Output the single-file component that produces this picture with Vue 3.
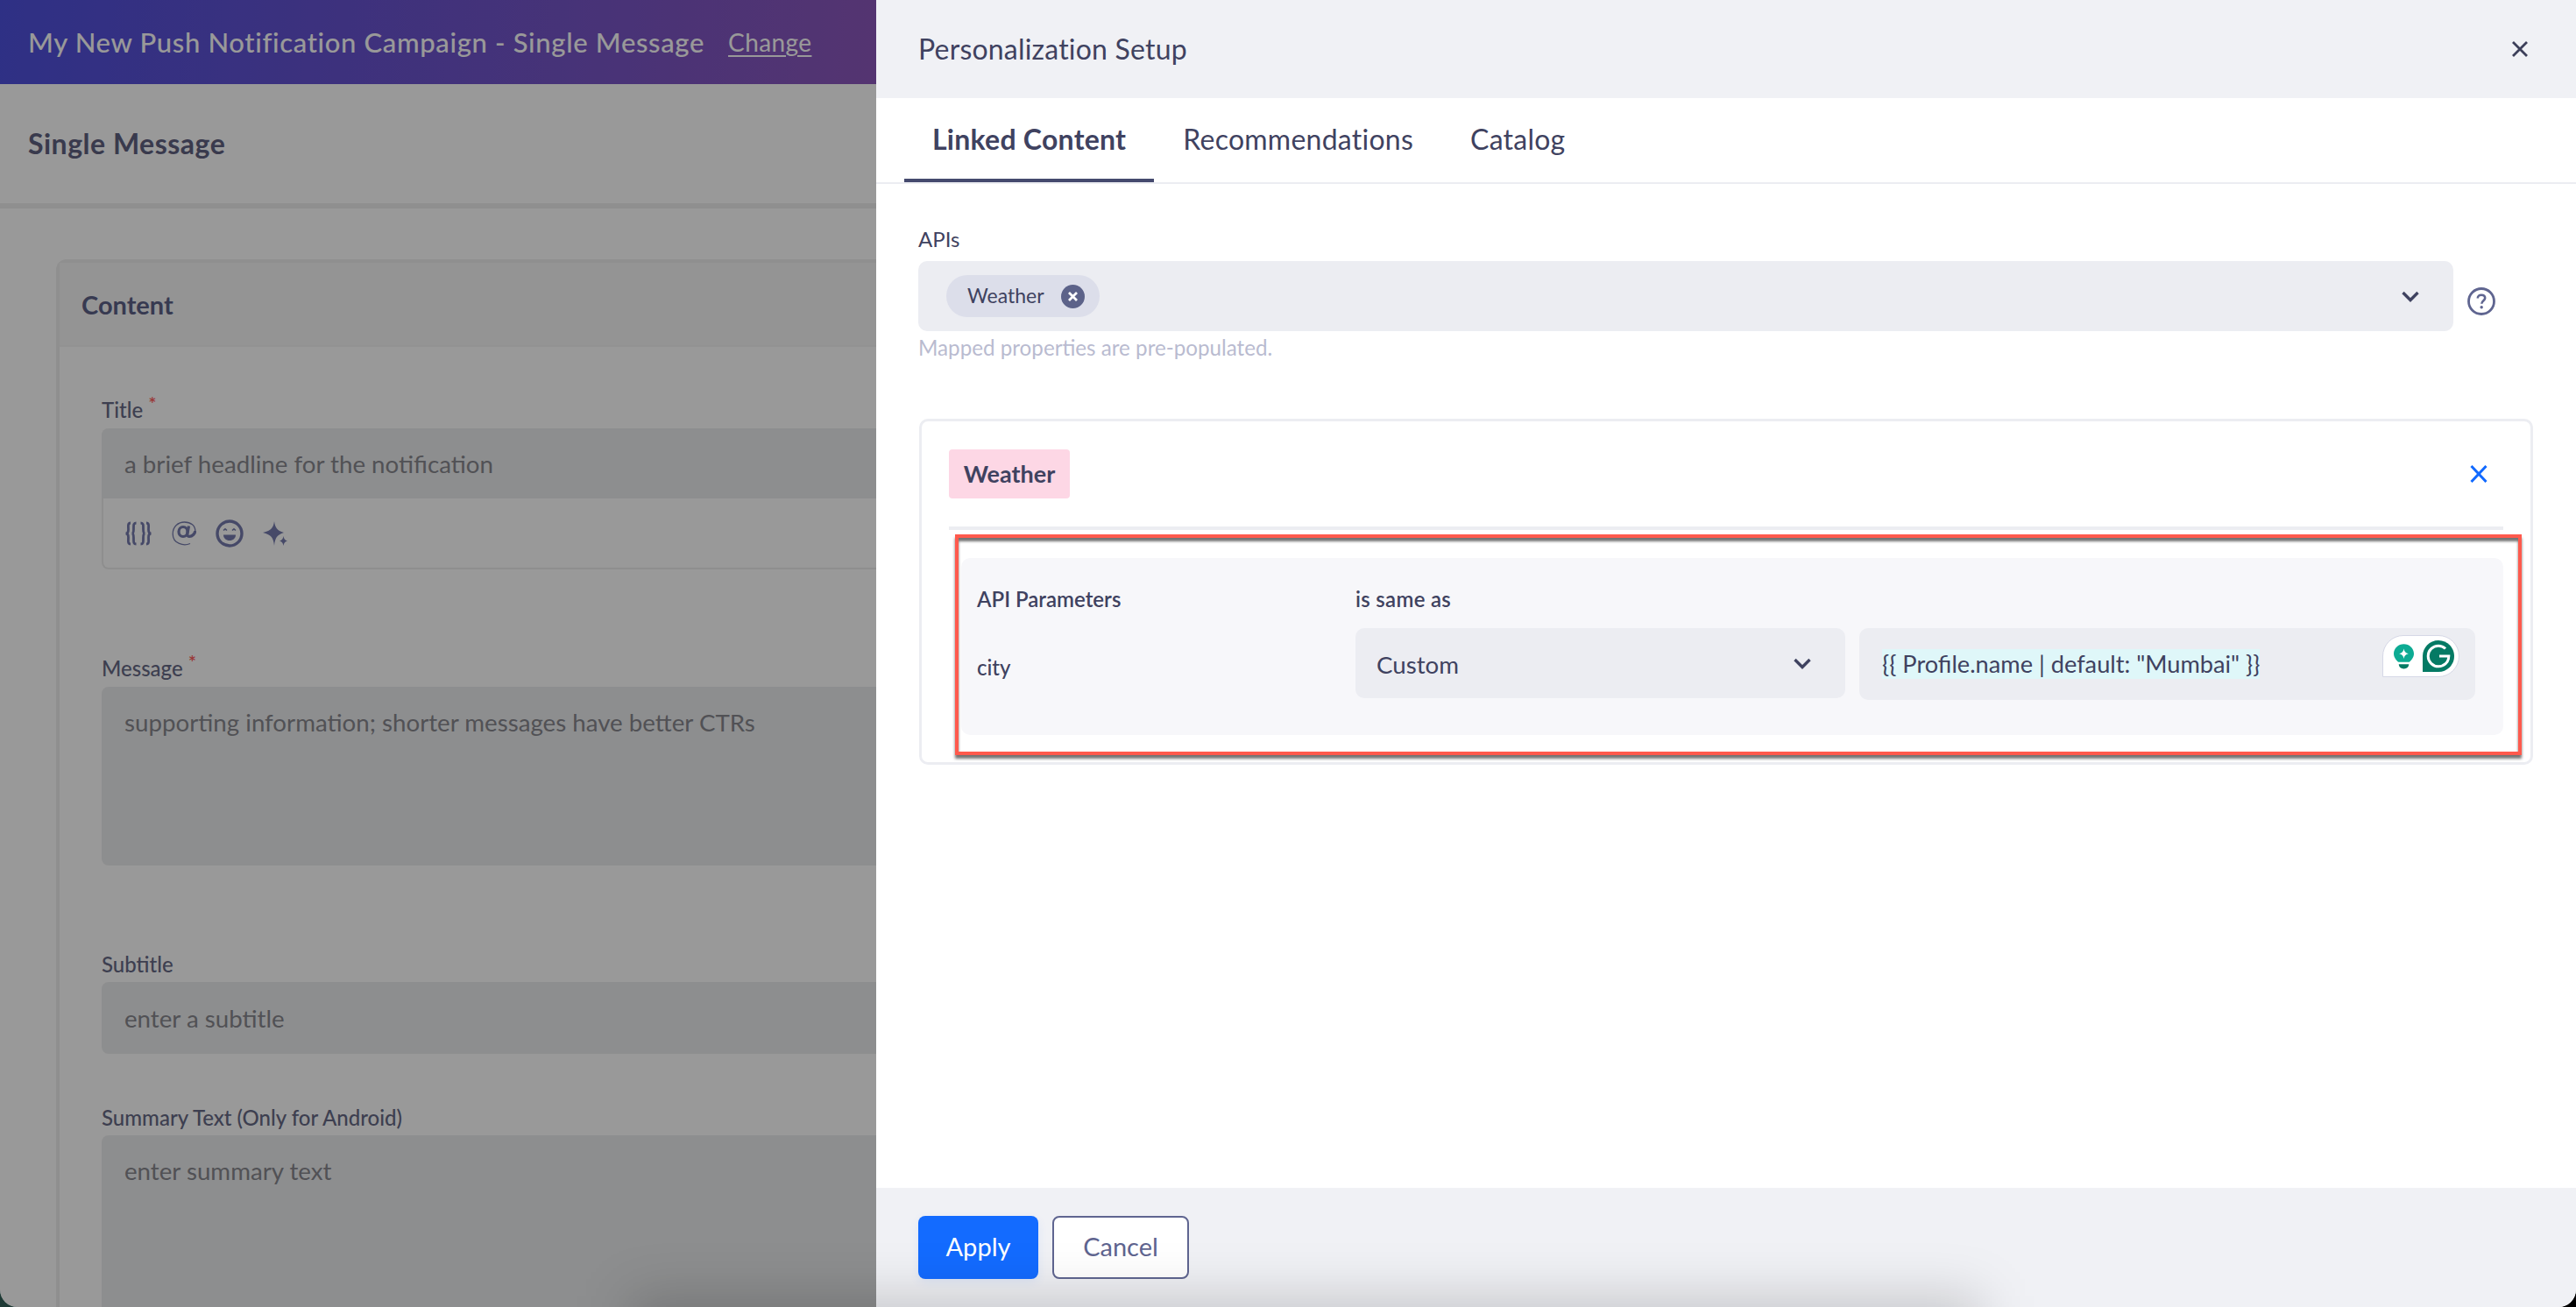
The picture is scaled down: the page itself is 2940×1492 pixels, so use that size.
<script setup>
const tabs = [
  { label: 'Linked Content', active: true },
  { label: 'Recommendations', active: false },
  { label: 'Catalog', active: false }
]
</script>

<template>
  <div class="screen">
    <div class="page">
      <header class="topbar">
        <span class="campaign">My New Push Notification Campaign - Single Message</span>
        <a class="change">Change</a>
      </header>
      <div class="subbar">Single Message</div>
      <div class="page-body">
        <section class="content-card">
          <div class="content-head">Content</div>
          <div class="content-body">
            <label class="field-label title-label">Title <sup class="req">*</sup></label>
            <div class="title-box">
              <div class="input-fake">a brief headline for the notification</div>
              <div class="toolbar">
                <svg class="ic-braces" viewBox="0 0 32 28" fill="none" stroke="#757bad" stroke-width="2.8">
                  <path d="M7 2C3.500 2 4.500 6 4.500 9.500C4.500 12 3.500 14 1.500 14C3.500 14 4.500 16 4.500 18.500C4.500 22 3.500 26 7 26" />
                  <path d="M25 2C28.500 2 27.500 6 27.500 9.500C27.500 12 28.500 14 30.500 14C28.500 14 27.500 16 27.500 18.500C27.500 22 28.500 26 25 26" />
                  <path d="M13.500 2C10 2 10.500 5 10.500 9C10.500 12 10 14 8.500 14C10 14 10.500 16 10.500 19C10.500 23 10 26 13.500 26" />
                  <path d="M18.500 2C22 2 21.500 5 21.500 9C21.500 12 22 14 23.500 14C22 14 21.500 16 21.500 19C21.500 23 22 26 18.500 26" />
                </svg>
                <svg class="ic-at" viewBox="0 0 28 28" fill="none" stroke="#757bad">
                  <path stroke-width="1.300" d="M21 25.500C14 28.500 1.200 26 1.200 14.500C1.200 6 7.500 1 14.500 1C22 1 26.800 5 26.800 11" />
                  <ellipse cx="13" cy="12" rx="5" ry="5.500" stroke-width="3.200" />
                  <path stroke-width="3.200" d="M19.500 5.500L17.800 15C17.500 18 22 18 24.500 15.500C26 14 26.800 12.500 26.800 11" />
                </svg>
                <svg class="ic-smile" viewBox="0 0 32 32" fill="none">
                  <circle cx="16" cy="16" r="14" stroke="#757bad" stroke-width="3.400" />
                  <path d="M9 12.500L11 10.800L13 12.500M19 12.500L21 10.800L23 12.500" stroke="#757bad" stroke-width="1.600" />
                  <path d="M9 17.500H23C23 21.500 20 24 16 24C12 24 9 21.500 9 17.500Z" fill="#757bad" />
                </svg>
                <svg class="ic-spark" viewBox="0 0 28 28" fill="#757bad">
                  <path d="M13 0C14 7 16 10.500 24 13C16 15.500 14 19 13 28C12 19 10 15.500 0 13C10 10.500 12 7 13 0Z" />
                  <path d="M23.500 17C24 20 25 21.500 28 22.500C25 23.500 24 25 23.500 28C23 25 22 23.500 19 22.500C22 21.500 23 20 23.500 17Z" />
                </svg>
              </div>
            </div>
            <label class="field-label message-label">Message <sup class="req">*</sup></label>
            <div class="area-fake message-area">supporting information; shorter messages have better CTRs</div>
            <label class="field-label subtitle-label">Subtitle</label>
            <div class="input-fake subtitle-input">enter a subtitle</div>
            <label class="field-label summary-label">Summary Text (Only for Android)</label>
            <div class="area-fake summary-area">enter summary text</div>
          </div>
        </section>
      </div>
      <div class="scrim"></div>
    </div>

    <aside class="drawer">
      <div class="drawer-head">
        <span class="drawer-title">Personalization Setup</span>
        <svg class="close-ic" viewBox="0 0 18 18" fill="none" stroke="#3c3f59" stroke-width="2.800">
          <path d="M1 1L17 17M17 1L1 17" />
        </svg>
      </div>
      <nav class="tabs">
        <a v-for="t in tabs" :key="t.label" class="tab" :class="{ active: t.active }">{{ t.label }}</a>
      </nav>
      <div class="drawer-content">
        <div class="apis-label">APIs</div>
        <div class="apis-row">
          <div class="select-box apis-select">
            <span class="chip">
              <span class="chip-text">Weather</span>
              <svg class="chip-x" viewBox="0 0 27 27">
                <circle cx="13.500" cy="13.500" r="13.500" fill="#5c6289" />
                <path d="M9 9L18 18M18 9L9 18" stroke="#fff" stroke-width="2.800" />
              </svg>
            </span>
            <svg class="chev" viewBox="0 0 20 13" fill="none" stroke="#3f4260" stroke-width="3.400">
              <path d="M1.500 2L10 10.500L18.500 2" />
            </svg>
          </div>
          <svg class="help-ic" viewBox="0 0 32 32" fill="none">
            <circle cx="16" cy="16" r="14.500" stroke="#5f6590" stroke-width="2.800" />
            <path d="M11.800 12.500C11.800 10 13.500 8.800 16 8.800C18.500 8.800 20.200 10.200 20.200 12.300C20.200 15.200 16.300 15.300 16.300 18.800" stroke="#5f6590" stroke-width="2.600" />
            <circle cx="16.200" cy="22.800" r="1.700" fill="#5f6590" />
          </svg>
        </div>
        <div class="helper">Mapped properties are pre-populated.</div>

        <section class="api-card">
          <div class="api-card-head">
            <span class="api-tag">Weather</span>
            <svg class="blue-x" viewBox="0 0 20 20" fill="none" stroke="#1169ff" stroke-width="3">
              <path d="M1.500 1L18.500 19M18.500 1L1.500 19" />
            </svg>
          </div>
          <div class="api-divider"></div>
          <div class="param-panel">
            <div class="param-label">API Parameters</div>
            <div class="param-label same-as">is same as</div>
            <div></div>
            <div class="param-name">city</div>
            <div class="select-box custom-select">
              <span class="custom-text">Custom</span>
              <svg class="chev" viewBox="0 0 20 13" fill="none" stroke="#3f4260" stroke-width="3.400">
                <path d="M1.500 2L10 10.500L18.500 2" />
              </svg>
            </div>
            <div class="liquid-input">
              <span class="liquid-text">{{ '{' + '{ Profile.name | default: "Mumbai" }' + '}' }}</span>
              <div class="grammarly">
                <svg class="g-bulb" viewBox="0 0 24 30">
                  <path d="M12 0C5.500 0 0 5 0 11.500C0 16 3 19 5.500 21.500H18.500C21 19 24 16 24 11.500C24 5 18.500 0 12 0Z" fill="#0dab93" />
                  <path d="M12 5.500C12.600 9 14 10.500 17.500 11.500C14 12.500 12.600 14 12 17.500C11.400 14 10 12.500 6.500 11.500C10 10.500 11.400 9 12 5.500Z" fill="#fff" />
                  <path d="M6 24H18C18 27 15.500 29.500 12 29.500C8.500 29.500 6 27 6 24Z" fill="#047a64" />
                </svg>
                <svg class="g-logo" viewBox="0 0 36 36">
                  <path d="M18 0C28 0 36 8 36 18C36 28 28 36 18 36H0V18C0 8 8 0 18 0Z" fill="#047a64" />
                  <path d="M26 9.500C23.800 7.400 21 6.200 18 6.200C11.500 6.200 6.200 11.500 6.200 18C6.200 24.500 11.500 29.800 18 29.800C24 29.800 29.800 25.500 29.800 18H19" fill="none" stroke="#fff" stroke-width="3" />
                </svg>
              </div>
            </div>
          </div>
          <div class="annotation"></div>
        </section>
      </div>
      <footer class="drawer-foot">
        <button class="btn-apply">Apply</button>
        <button class="btn-cancel">Cancel</button>
      </footer>
    </aside>
    <div class="bottom-shade"></div>
  </div>
</template>

<style>
html, body { margin: 0; padding: 0; background: #000; }
</style>

<style scoped>
.screen {
  position: relative;
  width: 2940px;
  height: 1492px;
  overflow: hidden;
  background: linear-gradient(90deg, #1e3a35 50%, #000 50%);
  font-family: Lato, "Liberation Sans", sans-serif;
  color: #3f4260;
}
.page {
  position: relative;
  width: 1040px;
  height: 1492px;
  background: #fff;
  border-bottom-left-radius: 20px;
  overflow: hidden;
  display: flex;
  flex-direction: column;
}
.topbar {
  height: 96px;
  flex: none;
  box-sizing: border-box;
  padding: 0 0 0 32px;
  display: flex;
  align-items: center;
  gap: 27px;
  background: linear-gradient(95deg, #4e50de 0%, #8f58bb 100%);
  color: #fff;
}
.campaign { font-size: 31px; font-weight: 500; letter-spacing: 0.66px; }
.change { font-size: 28px; letter-spacing: 0.4px; text-decoration: underline; text-underline-offset: 4px; }
.subbar {
  height: 142px;
  flex: none;
  box-sizing: border-box;
  padding: 0 0 2px 32px;
  display: flex;
  align-items: center;
  font-size: 32px;
  font-weight: 700;
  letter-spacing: 0.5px;
  color: #5f6180;
  border-bottom: 6px solid #eeeeee;
}
.page-body { padding: 58px 0 0 64px; flex: 1; min-height: 0; }
.content-card {
  border: 4px solid #eeeeee;
  border-right: none;
  border-radius: 12px 0 0 0;
  background: #fff;
  height: 1400px;
}
.content-head {
  height: 96px;
  box-sizing: border-box;
  padding-left: 25px;
  display: flex;
  align-items: center;
  background: #f7f7f7;
  font-size: 29px;
  font-weight: 700;
  color: #5d6187;
  border-bottom: 2px solid #f4f4f4;
}
.content-body { padding: 56px 0 0 48px; }
.field-label {
  display: block;
  height: 32px;
  line-height: 32px;
  font-size: 24px;
  font-weight: 500;
  color: #676a86;
}
.req { color: #ff5a5a; font-size: 22px; line-height: 0; vertical-align: 8px; }
.title-box {
  margin-top: 5px;
  border: 2px solid #ededed;
  border-top: none;
  border-right: none;
  border-radius: 8px 0 0 8px;
  height: 161px;
  box-sizing: border-box;
}
.input-fake {
  height: 80px;
  box-sizing: border-box;
  padding-left: 26px;
  display: flex;
  align-items: center;
  background: #ecedee;
  border-radius: 8px 0 0 0;
  font-size: 27.7px;
  color: #88888e;
}
.title-box .input-fake { margin-left: -2px; padding-left: 26px; }
.toolbar {
  height: 80px;
  box-sizing: border-box;
  padding-left: 24px;
  display: flex;
  align-items: center;
}
.ic-braces { width: 32px; height: 28px; margin-right: 22px; }
.ic-at { width: 28px; height: 28px; margin-right: 22px; }
.ic-smile { width: 32px; height: 32px; margin-right: 22px; }
.ic-spark { width: 28px; height: 28px; }
.message-label { margin-top: 97px; }
.area-fake {
  margin-top: 5px;
  box-sizing: border-box;
  padding: 24px 0 0 26px;
  line-height: 34px;
  background: #ecedee;
  border-radius: 8px 0 0 8px;
  font-size: 27.7px;
  color: #88888e;
  white-space: nowrap;
}
.message-area { height: 204px; }
.subtitle-label { margin-top: 97px; }
.subtitle-input { margin-top: 4px; height: 82px; border-radius: 8px 0 0 8px; }
.summary-label { margin-top: 57px; }
.summary-area { margin-top: 4px; height: 400px; }
.scrim {
  position: absolute;
  inset: 0;
  background: rgba(0, 0, 0, 0.4);
}
.drawer {
  position: absolute;
  top: 0;
  right: 0;
  width: 1940px;
  height: 1492px;
  background: #fff;
  display: flex;
  flex-direction: column;
  border-bottom-right-radius: 20px;
  overflow: hidden;
}
.drawer-head {
  height: 112px;
  flex: none;
  box-sizing: border-box;
  padding: 0 55px 0 48px;
  background: #f0f1f5;
  display: flex;
  align-items: center;
  justify-content: space-between;
}
.drawer-title { font-size: 32px; font-weight: 400; letter-spacing: 0.2px; margin-top: -2px; }
.close-ic { width: 18px; height: 18px; }
.tabs {
  height: 98px;
  flex: none;
  box-sizing: border-box;
  padding-left: 32px;
  display: flex;
  gap: 1px;
  border-bottom: 2px solid #ecedf2;
}
.tab {
  padding: 0 32px;
  display: flex;
  align-items: center;
  height: 92px;
  font-size: 32px;
  letter-spacing: 0.25px;
  border-bottom: 4px solid transparent;
  box-sizing: content-box;
}
.tab.active { font-weight: 700; border-bottom-color: #454a6e; }
.drawer-content { flex: 1; min-height: 0; padding: 47px 0 0 48px; }
.apis-label { height: 32px; line-height: 32px; font-size: 24px; }
.apis-row { margin-top: 9px; display: flex; }
.select-box {
  background: #ecedf2;
  border-radius: 10px;
  display: flex;
  align-items: center;
  justify-content: space-between;
  box-sizing: border-box;
}
.apis-select { width: 1752px; height: 80px; padding: 0 39px 0 32px; }
.chip {
  height: 48px;
  width: 175px;
  box-sizing: border-box;
  padding: 0 17px 0 24px;
  border-radius: 24px;
  background: #dcdeea;
  display: flex;
  align-items: center;
  justify-content: space-between;
}
.chip-text { font-size: 23px; margin-top: -2px; }
.chip-x { width: 27px; height: 27px; }
.chev { width: 20px; height: 13px; }
.help-ic { width: 32px; height: 32px; margin: 30px 0 0 16px; }
.helper { margin-top: 3px; height: 33px; line-height: 32px; font-size: 24.2px; color: #b9bbd0; }
.api-card {
  position: relative;
  margin: 64px 0 0 1px;
  width: 1842px;
  height: 395px;
  box-sizing: border-box;
  border: 3px solid #ecedf2;
  border-radius: 10px;
  padding: 32px 31px 0;
}
.api-card-head {
  display: flex;
  align-items: center;
  justify-content: space-between;
  padding-right: 15px;
}
.api-tag {
  width: 138px;
  height: 56px;
  display: flex;
  align-items: center;
  justify-content: center;
  background: #fdd7e5;
  border-radius: 4px;
  font-size: 27px;
  font-weight: 700;
  padding-bottom: 2px;
  box-sizing: border-box;
}
.blue-x { width: 20px; height: 20px; margin-right: 3px; }
.api-divider { margin-top: 32px; height: 4px; background: #ecedf2; }
.param-panel {
  margin: 32px 0 0 14px;
  height: 202px;
  box-sizing: border-box;
  padding: 31px 0 0 18px;
  background: #f7f7fa;
  border-radius: 10px;
  display: grid;
  grid-template-columns: 432px 559px 703px;
  grid-template-rows: 32px auto;
  column-gap: 0;
  row-gap: 17px;
}
.param-label { font-size: 24px; font-weight: 600; line-height: 32px; }
.same-as { letter-spacing: 0.3px; }
.param-name { font-size: 24px; font-weight: 500; line-height: 32px; padding-top: 29px; }
.custom-select { height: 80px; width: 559px; padding: 0 39px 0 24px; }
.custom-text { font-size: 27.7px; margin-top: 2px; }
.liquid-input {
  position: relative;
  margin-left: 16px;
  width: 703px;
  height: 82px;
  box-sizing: border-box;
  padding: 24px 0 0 26px;
  background: #ecedf2;
  border-radius: 10px;
}
.liquid-text {
  display: inline-block;
  height: 34px;
  line-height: 34px;
  background: #dff7f9;
  font-size: 27.2px;
  white-space: nowrap;
}
.grammarly {
  position: absolute;
  top: 8px;
  right: 18px;
  width: 88px;
  height: 48px;
  box-sizing: border-box;
  background: #fff;
  border: 1.500px solid #d6d8e6;
  border-radius: 24px 24px 24px 0;
  display: flex;
  align-items: center;
  gap: 10px;
  padding-left: 12px;
}
.g-bulb { width: 23px; height: 29px; }
.g-logo { width: 36px; height: 36px; }
.annotation {
  position: absolute;
  left: 38px;
  top: 129px;
  width: 1788px;
  height: 252px;
  box-sizing: border-box;
  border: 4px solid #ff5a4d;
  box-shadow: 0 4px 3px rgba(0, 0, 0, 0.55), inset 0 4px 3px rgba(0, 0, 0, 0.55);
}
.drawer-foot {
  height: 136px;
  flex: none;
  box-sizing: border-box;
  padding: 32px 0 0 48px;
  background: #f0f1f5;
  display: flex;
  align-items: flex-start;
  gap: 16px;
}
.btn-apply, .btn-cancel {
  height: 72px;
  box-sizing: border-box;
  border-radius: 8px;
  font-family: inherit;
  font-size: 29px;
  padding: 0 0 3px;
}
.btn-apply {
  width: 137px;
  border: none;
  background: #136bff;
  color: #fff;
  box-shadow: 0 4px 12px rgba(19, 107, 255, 0.08);
}
.btn-cancel {
  width: 156px;
  border: 2px solid #5f6590;
  background: #fff;
  color: #5f6590;
}
.bottom-shade {
  position: absolute;
  left: 720px;
  bottom: -88px;
  width: 1540px;
  height: 100px;
  background: rgba(0, 0, 0, 0.17);
  filter: blur(30px);
  pointer-events: none;
}
</style>
